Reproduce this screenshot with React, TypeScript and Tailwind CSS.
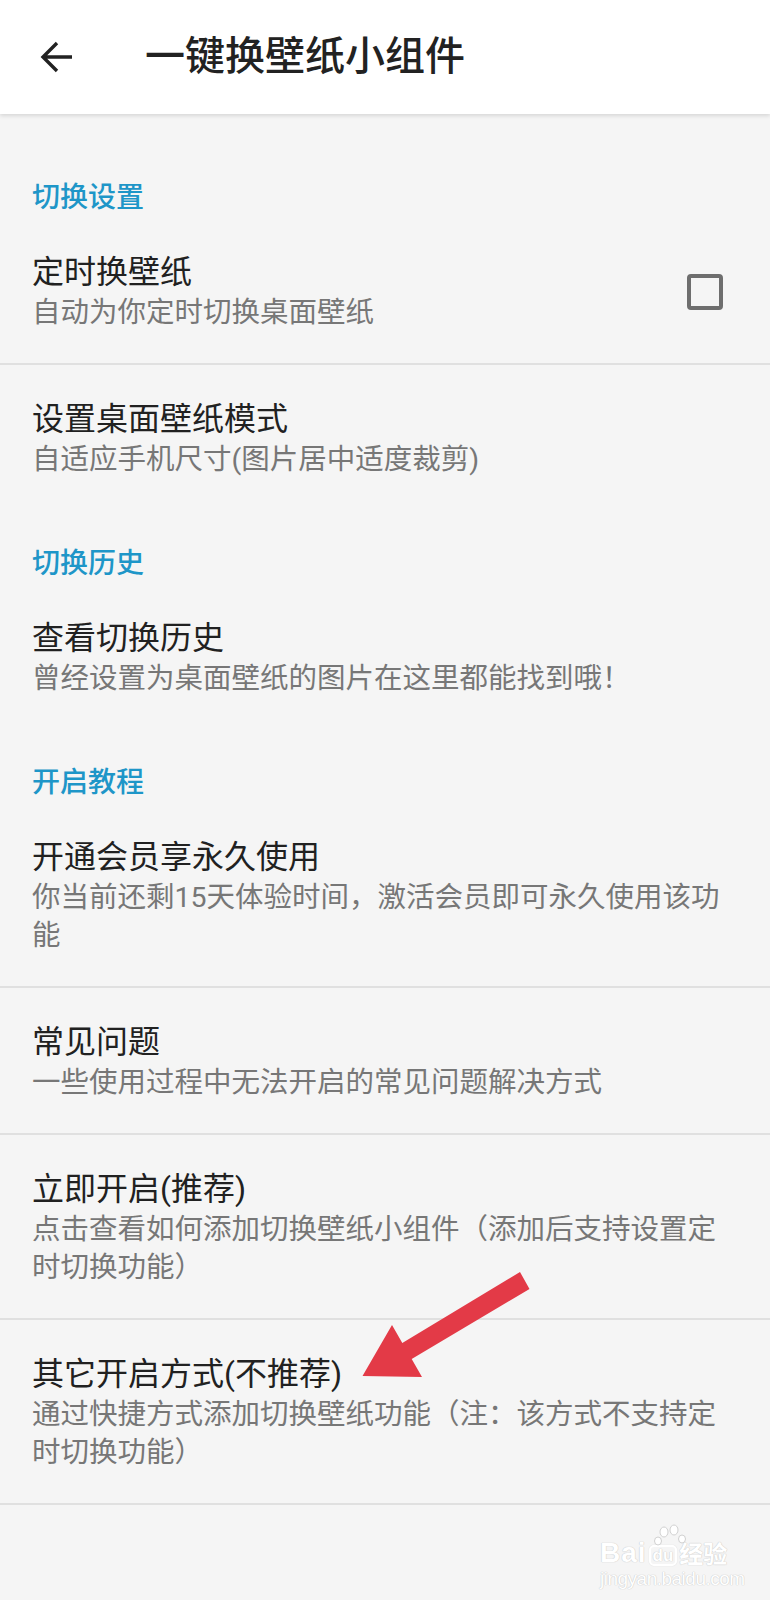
import React from "react";

const FONT = { fontFamily: 'Roboto, "Noto Sans CJK SC", sans-serif' };

function Section({ label }: { label: string }) {
  return (
    <div className="pt-[36px] pb-[2px] pl-[32px]">
      <div className="text-[28px] leading-[36px] font-medium text-[#1e96c8]">{label}</div>
    </div>
  );
}

function Item({
  title,
  sub,
  divider = true,
  checkbox = false,
}: {
  title: string;
  sub: string;
  divider?: boolean;
  checkbox?: boolean;
}) {
  return (
    <div className={divider ? "border-b-2 border-[#e0e0e0]" : ""}>
      <div className="flex items-center pl-[32px] pr-[38px] pt-[34px] pb-[31px]">
        <div className="flex-1 min-w-0">
          <div className="text-[32px] leading-[40px] text-[#212121]">{title}</div>
          <div className="mt-[2px] text-[28.5px] leading-[38px] text-[#777777]">{sub}</div>
        </div>
        {checkbox && (
          <div className="ml-4 mr-[9px] w-[36px] h-[36px] border-[4px] border-[#6e6e6e] rounded-[4px] shrink-0" />
        )}
      </div>
    </div>
  );
}

export default function App() {
  return (
    <div className="relative w-[770px] min-h-[1600px] bg-[#f5f5f5] overflow-hidden" style={FONT}>
      {/* Header */}
      <div className="relative z-10 h-[114px] bg-white flex items-center shadow-[0_2px_4px_rgba(0,0,0,0.12)]">
        <div className="w-[145px] pl-[32px] flex items-center">
          <svg width="48" height="48" viewBox="0 0 24 24" fill="#222222">
            <path d="M20 11.1H7.6l5.5-5.5L11.9 4.4 4.3 12l7.6 7.6 1.2-1.2-5.5-5.5H20v-1.8z" />
          </svg>
        </div>
        <div className="text-[40px] leading-[48px] font-medium text-[#222222]">一键换壁纸小组件</div>
      </div>

      {/* List */}
      <div className="pt-[30px]">
        <Section label="切换设置" />
        <Item title="定时换壁纸" sub="自动为你定时切换桌面壁纸" checkbox />
        <Item title="设置桌面壁纸模式" sub="自适应手机尺寸(图片居中适度裁剪)" divider={false} />
        <Section label="切换历史" />
        <Item title="查看切换历史" sub="曾经设置为桌面壁纸的图片在这里都能找到哦！" divider={false} />
        <Section label="开启教程" />
        <Item title="开通会员享永久使用" sub="你当前还剩15天体验时间，激活会员即可永久使用该功能" />
        <Item title="常见问题" sub="一些使用过程中无法开启的常见问题解决方式" />
        <Item title="立即开启(推荐)" sub="点击查看如何添加切换壁纸小组件（添加后支持设置定时切换功能）" />
        <Item title="其它开启方式(不推荐)" sub="通过快捷方式添加切换壁纸功能（注：该方式不支持定时切换功能）" />
      </div>

      {/* Red annotation arrow */}
      <svg
        className="absolute top-0 left-0 pointer-events-none"
        width="770"
        height="1600"
        viewBox="0 0 770 1600"
      >
        <polygon
          points="520,1272 529.5,1289 411.7,1358.9 422,1377 362.5,1376 392,1325 402.3,1343.1"
          fill="#e33a47"
        />
      </svg>

      {/* Baidu watermark */}
      <div
        className="absolute left-[600px] top-[1522px] text-white pointer-events-none"
        style={{ textShadow: "0 0 1px #c8c8c8, 0 0 1px #c8c8c8", fontFamily: '"Liberation Sans", sans-serif' }}
      >
        <div className="relative flex items-end h-[46px]">
          <span className="text-[28px] leading-[30px] font-bold tracking-[1px]">Bai</span>
          <span className="ml-[2px] mb-[2px] px-[2px] h-[21px] flex items-center rounded-[5px] border-2 border-white text-[17px] leading-[18px] font-bold shadow-[0_0_1px_#c8c8c8]">
            du
          </span>
          <span
            className="ml-[2px] text-[24px] leading-[30px] font-bold"
            style={{ fontFamily: '"Noto Sans CJK SC", sans-serif' }}
          >
            经验
          </span>
          <svg className="absolute left-[50px] top-[2px]" width="44" height="24" viewBox="0 0 44 24">
            <g fill="#ffffff" stroke="#d0d0d0" strokeWidth="1">
              <ellipse cx="14" cy="8" rx="4" ry="5" />
              <ellipse cx="24" cy="6" rx="4" ry="5" />
              <ellipse cx="8" cy="17" rx="3.5" ry="4" />
              <ellipse cx="32" cy="15" rx="3.5" ry="4" />
            </g>
          </svg>
        </div>
        <div className="text-[19px] leading-[22px] tracking-[-0.5px]">jingyan.baidu.com</div>
      </div>
    </div>
  );
}
